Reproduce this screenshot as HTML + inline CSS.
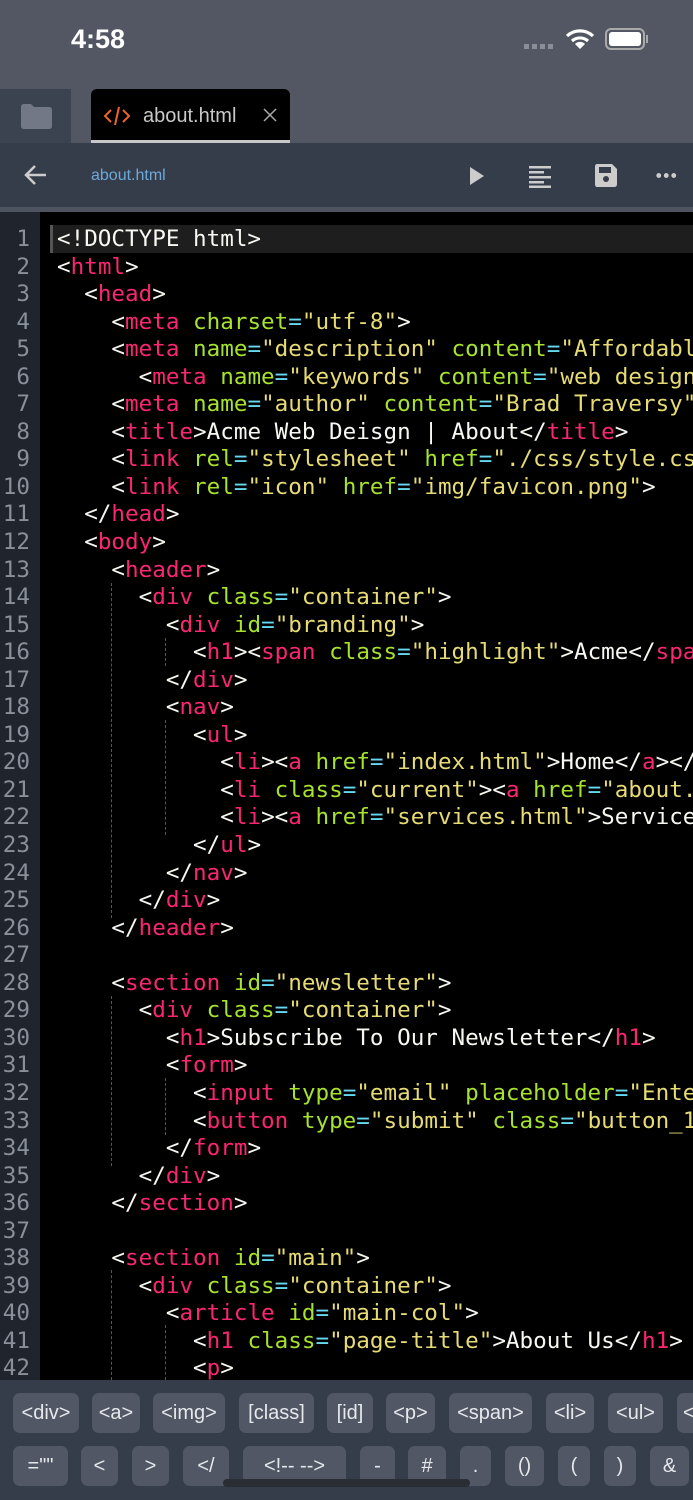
<!DOCTYPE html>
<html><head><meta charset="utf-8">
<style>
*{margin:0;padding:0;box-sizing:border-box}
body{width:693px;height:1500px;overflow:hidden;background:#000;font-family:"Liberation Sans",sans-serif;position:relative}
.abs{position:absolute}
#status{left:0;top:0;width:693px;height:89px;background:#535764}
#tabs{left:0;top:89px;width:693px;height:54px;background:#535764}
#folder{left:0;top:89px;width:71px;height:54px;background:#3b4250}
#tab{left:91px;top:89px;width:199px;height:54px;background:#000;border-radius:6px 6px 0 0;border-bottom:3px solid #c8c8c8}
#toolbar{left:0;top:143px;width:693px;height:64px;background:#353d4b}
#sep{left:0;top:207px;width:693px;height:5px;background:#4d535f}
#gutter{left:0;top:212px;width:40px;height:1168px;background:#1f242d}
#hl{left:50px;top:225px;width:643px;height:28px;background:#1e1e1e;border-left:3px solid #555}
.code{position:absolute;top:226px;font-family:"DejaVu Sans Mono","Liberation Mono",monospace;font-size:22.6px;line-height:27.55px;white-space:pre}
#nums{left:0;width:30px;text-align:right;color:#8a9099}
#src{left:57px;color:#f8f8f2}
.t{color:#f92672}.a{color:#a6e22e}.s{color:#e6db74}.e{color:#66d9ef}
.g{position:absolute;border-left:1px dashed #555;width:0}
#kb{left:0;top:1380px;width:693px;height:120px;background:#353d4b}
.k{position:absolute;background:#515765;border-radius:7px;color:#e6e8ec;font-size:20px;display:flex;align-items:center;justify-content:center;height:40px}
.r1{top:1393px}.r2{top:1446px}
</style></head><body>
<div id="status" class="abs"></div>
<div class="abs" style="left:71px;top:24px;color:#fff;font-size:27px;font-weight:bold">4:58</div>
<div class="abs" style="left:524px;top:44px;width:32px;height:5px;background:repeating-linear-gradient(90deg,#8a8e98 0 5px,transparent 5px 8px)"></div>
<svg class="abs" style="left:565px;top:28px" width="30" height="22" viewBox="0 0 30 22"><path d="M2 8 A19 19 0 0 1 28 8" stroke="#fff" stroke-width="3.2" fill="none"/><path d="M7 13 A12 12 0 0 1 23 13" stroke="#fff" stroke-width="3.2" fill="none"/><path d="M15 21 L10 16 A7 7 0 0 1 20 16Z" fill="#fff"/></svg>
<div class="abs" style="left:605px;top:28px;width:40px;height:22px;border:2px solid #aaa;border-radius:6px;padding:2px"><div style="width:100%;height:100%;background:#fff;border-radius:3px"></div></div>
<div class="abs" style="left:646px;top:35px;width:2px;height:8px;background:#aaa"></div>
<div id="tabs" class="abs"></div>
<div id="folder" class="abs"></div>
<svg class="abs" style="left:19px;top:103px" width="34" height="26" viewBox="0 0 34 26"><path d="M2 4 Q2 1 5 1 H12 L15 4 H30 Q33 4 33 7 V23 Q33 26 30 26 H5 Q2 26 2 23Z" fill="#737886"/></svg>
<div id="tab" class="abs"></div>
<svg class="abs" style="left:104px;top:106px" width="26" height="20" viewBox="0 0 26 20"><path d="M7 4 L1 10 L7 16 M19 4 L25 10 L19 16 M15 1 L11 19" stroke="#f0642c" stroke-width="2" fill="none"/></svg>
<div class="abs" style="left:143px;top:105px;color:#c8c8c8;font-size:20px">about.html</div>
<svg class="abs" style="left:263px;top:108px" width="14" height="14"><path d="M1 1 L13 13 M13 1 L1 13" stroke="#aaa" stroke-width="1.5"/></svg>
<div id="toolbar" class="abs"></div>
<svg class="abs" style="left:24px;top:164px" width="24" height="22" viewBox="0 0 24 22"><path d="M22 11 H3 M11 2 L2 11 L11 20" stroke="#ccc" stroke-width="2.5" fill="none"/></svg>
<div class="abs" style="left:91px;top:167px;color:#6ea8d8;font-size:16px">about.html</div>
<svg class="abs" style="left:469px;top:166px" width="16" height="20"><path d="M1 1 L15 10 L1 19Z" fill="#ccc"/></svg>
<svg class="abs" style="left:529px;top:164px" width="24" height="24"><g fill="#ccc"><rect x="0" y="2" width="22" height="2.5"/><rect x="0" y="7" width="15" height="2.5"/><rect x="0" y="12" width="22" height="2.5"/><rect x="0" y="17" width="15" height="2.5"/><rect x="0" y="21.5" width="22" height="2.5"/></g></svg>
<svg class="abs" style="left:594px;top:163px" width="24" height="25"><path d="M3 1 H18 L23 6 V21 Q23 24 20 24 H3 Q1 24 1 21 V4 Q1 1 3 1Z" fill="#ccc"/><rect x="5" y="4" width="12" height="6" fill="#353d4b"/><circle cx="12" cy="16" r="3" fill="#353d4b"/></svg>
<div class="abs" style="left:655px;top:173px;width:22px;height:5px;background:radial-gradient(circle,#ccc 2.2px,transparent 2.6px) 0 0/7.5px 5px"></div>
<div id="sep" class="abs"></div>
<div id="gutter" class="abs"></div>
<div id="hl" class="abs"></div>
<div class="g" style="left:111px;top:583px;height:335px"></div>
<div class="g" style="left:165px;top:638px;height:28px"></div>
<div class="g" style="left:165px;top:720px;height:115px"></div>
<div class="g" style="left:111px;top:996px;height:170px"></div>
<div class="g" style="left:165px;top:1078px;height:57px"></div>
<div class="g" style="left:111px;top:1270px;height:110px"></div>
<div class="g" style="left:165px;top:1325px;height:55px"></div>
<div id="nums" class="code">1
2
3
4
5
6
7
8
9
10
11
12
13
14
15
16
17
18
19
20
21
22
23
24
25
26
27
28
29
30
31
32
33
34
35
36
37
38
39
40
41
42</div>
<div id="src" class="code">&lt;!DOCTYPE html&gt;
&lt;<span class="t">html</span>&gt;
  &lt;<span class="t">head</span>&gt;
    &lt;<span class="t">meta</span> <span class="a">charset</span><span class="e">=</span><span class="s">"utf-8"</span>&gt;
    &lt;<span class="t">meta</span> <span class="a">name</span><span class="e">=</span><span class="s">"description"</span> <span class="a">content</span><span class="e">=</span><span class="s">"Affordable</span>
      &lt;<span class="t">meta</span> <span class="a">name</span><span class="e">=</span><span class="s">"keywords"</span> <span class="a">content</span><span class="e">=</span><span class="s">"web design</span>
    &lt;<span class="t">meta</span> <span class="a">name</span><span class="e">=</span><span class="s">"author"</span> <span class="a">content</span><span class="e">=</span><span class="s">"Brad Traversy"</span>
    &lt;<span class="t">title</span>&gt;Acme Web Deisgn | About&lt;/<span class="t">title</span>&gt;
    &lt;<span class="t">link</span> <span class="a">rel</span><span class="e">=</span><span class="s">"stylesheet"</span> <span class="a">href</span><span class="e">=</span><span class="s">"./css/style.css</span>
    &lt;<span class="t">link</span> <span class="a">rel</span><span class="e">=</span><span class="s">"icon"</span> <span class="a">href</span><span class="e">=</span><span class="s">"img/favicon.png"</span>&gt;
  &lt;/<span class="t">head</span>&gt;
  &lt;<span class="t">body</span>&gt;
    &lt;<span class="t">header</span>&gt;
      &lt;<span class="t">div</span> <span class="a">class</span><span class="e">=</span><span class="s">"container"</span>&gt;
        &lt;<span class="t">div</span> <span class="a">id</span><span class="e">=</span><span class="s">"branding"</span>&gt;
          &lt;<span class="t">h1</span>&gt;&lt;<span class="t">span</span> <span class="a">class</span><span class="e">=</span><span class="s">"highlight"</span>&gt;Acme&lt;/<span class="t">span</span>
        &lt;/<span class="t">div</span>&gt;
        &lt;<span class="t">nav</span>&gt;
          &lt;<span class="t">ul</span>&gt;
            &lt;<span class="t">li</span>&gt;&lt;<span class="t">a</span> <span class="a">href</span><span class="e">=</span><span class="s">"index.html"</span>&gt;Home&lt;/<span class="t">a</span>&gt;&lt;/
            &lt;<span class="t">li</span> <span class="a">class</span><span class="e">=</span><span class="s">"current"</span>&gt;&lt;<span class="t">a</span> <span class="a">href</span><span class="e">=</span><span class="s">"about.</span>
            &lt;<span class="t">li</span>&gt;&lt;<span class="t">a</span> <span class="a">href</span><span class="e">=</span><span class="s">"services.html"</span>&gt;Services
          &lt;/<span class="t">ul</span>&gt;
        &lt;/<span class="t">nav</span>&gt;
      &lt;/<span class="t">div</span>&gt;
    &lt;/<span class="t">header</span>&gt;

    &lt;<span class="t">section</span> <span class="a">id</span><span class="e">=</span><span class="s">"newsletter"</span>&gt;
      &lt;<span class="t">div</span> <span class="a">class</span><span class="e">=</span><span class="s">"container"</span>&gt;
        &lt;<span class="t">h1</span>&gt;Subscribe To Our Newsletter&lt;/<span class="t">h1</span>&gt;
        &lt;<span class="t">form</span>&gt;
          &lt;<span class="t">input</span> <span class="a">type</span><span class="e">=</span><span class="s">"email"</span> <span class="a">placeholder</span><span class="e">=</span><span class="s">"Enter</span>
          &lt;<span class="t">button</span> <span class="a">type</span><span class="e">=</span><span class="s">"submit"</span> <span class="a">class</span><span class="e">=</span><span class="s">"button_1</span>
        &lt;/<span class="t">form</span>&gt;
      &lt;/<span class="t">div</span>&gt;
    &lt;/<span class="t">section</span>&gt;

    &lt;<span class="t">section</span> <span class="a">id</span><span class="e">=</span><span class="s">"main"</span>&gt;
      &lt;<span class="t">div</span> <span class="a">class</span><span class="e">=</span><span class="s">"container"</span>&gt;
        &lt;<span class="t">article</span> <span class="a">id</span><span class="e">=</span><span class="s">"main-col"</span>&gt;
          &lt;<span class="t">h1</span> <span class="a">class</span><span class="e">=</span><span class="s">"page-title"</span>&gt;About Us&lt;/<span class="t">h1</span>&gt;
          &lt;<span class="t">p</span>&gt;</div>
<div id="kb" class="abs"></div>
<div class="k r1" style="left:13px;width:66px">&lt;div&gt;</div>
<div class="k r1" style="left:92px;width:48px">&lt;a&gt;</div>
<div class="k r1" style="left:153px;width:72px">&lt;img&gt;</div>
<div class="k r1" style="left:239px;width:75px">[class]</div>
<div class="k r1" style="left:327px;width:46px">[id]</div>
<div class="k r1" style="left:386px;width:49px">&lt;p&gt;</div>
<div class="k r1" style="left:449px;width:83px">&lt;span&gt;</div>
<div class="k r1" style="left:546px;width:48px">&lt;li&gt;</div>
<div class="k r1" style="left:608px;width:55px">&lt;ul&gt;</div>
<div class="k r1" style="left:677px;width:40px;justify-content:flex-start;padding-left:6px">&lt;</div>
<div class="k r2" style="left:13px;width:55px">=""</div>
<div class="k r2" style="left:81px;width:37px">&lt;</div>
<div class="k r2" style="left:132px;width:37px">&gt;</div>
<div class="k r2" style="left:183px;width:46px">&lt;/</div>
<div class="k r2" style="left:243px;width:103px">&lt;!-- --&gt;</div>
<div class="k r2" style="left:360px;width:35px">-</div>
<div class="k r2" style="left:408px;width:38px">#</div>
<div class="k r2" style="left:460px;width:31px">.</div>
<div class="k r2" style="left:505px;width:39px">()</div>
<div class="k r2" style="left:558px;width:32px">(</div>
<div class="k r2" style="left:604px;width:32px">)</div>
<div class="k r2" style="left:650px;width:39px">&amp;</div>
<div class="abs" style="left:223px;top:1479px;width:247px;height:8px;border-radius:4px;background:#2a2d33"></div>
</body></html>
